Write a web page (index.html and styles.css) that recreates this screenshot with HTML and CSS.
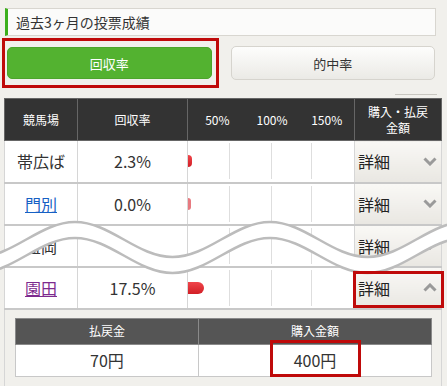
FILE: index.html
```html
<!DOCTYPE html>
<html lang="ja">
<head>
    <meta charset="UTF-8">
    <meta name="viewport" content="width=device-width, initial-scale=1.0">
    <title>過去3ヶ月の投票成績</title>
    <link rel="stylesheet" href="styles.css">
</head>
<body>
    <div class="heading">過去3ヶ月の投票成績</div>

    <div class="tabs">
        <button class="tab active">回収率</button>
        <button class="tab">的中率</button>
    </div>
    <div class="rule"></div>

    <table class="results">
        <colgroup>
            <col class="c-venue">
            <col class="c-rate">
            <col class="c-chart">
            <col class="c-more">
        </colgroup>
        <thead>
            <tr>
                <th>競馬場</th>
                <th>回収率</th>
                <th><div class="scale"><span>50%</span><span>100%</span><span>150%</span></div></th>
                <th>購入・払戻<br>金額</th>
            </tr>
        </thead>
        <tbody>
            <tr>
                <td>帯広ば</td>
                <td>2.3%</td>
                <td><div class="chart"><i></i><i></i><i></i><i></i><b class="bar" style="width: 4px"></b></div></td>
                <td class="more"><div class="more-btn">詳細<svg class="chev" viewBox="0 0 14 9"><polyline points="1.5,1.5 7,7 12.5,1.5"/></svg></div></td>
            </tr>
            <tr>
                <td><a href="#" class="venue">門別</a></td>
                <td>0.0%</td>
                <td><div class="chart"><i></i><i></i><i></i><i></i><b class="bar zero" style="width: 3px"></b></div></td>
                <td class="more"><div class="more-btn">詳細<svg class="chev" viewBox="0 0 14 9"><polyline points="1.5,1.5 7,7 12.5,1.5"/></svg></div></td>
            </tr>
            <tr>
                <td>盛岡</td>
                <td></td>
                <td><div class="chart"><i></i><i></i><i></i><i></i></div></td>
                <td class="more"><div class="more-btn">詳細<svg class="chev" viewBox="0 0 14 9"><polyline points="1.5,1.5 7,7 12.5,1.5"/></svg></div></td>
            </tr>
            <tr>
                <td><a href="#" class="venue visited">園田</a></td>
                <td>17.5%</td>
                <td><div class="chart"><i></i><i></i><i></i><i></i><b class="bar" style="width: 16px"></b></div></td>
                <td class="more"><div class="more-btn">詳細<svg class="chev" viewBox="0 0 14 9"><polyline points="1.5,7.5 7,2 12.5,7.5"/></svg></div></td>
            </tr>
            <tr class="detail">
                <td colspan="4">
                    <table class="breakdown">
                        <colgroup>
                            <col class="c-pay">
                            <col>
                        </colgroup>
                        <tr><th>払戻金</th><th>購入金額</th></tr>
                        <tr><td>70円</td><td>400円</td></tr>
                    </table>
                </td>
            </tr>
            <tr>
                <td></td>
                <td></td>
                <td><div class="chart"><i></i><i></i><i></i><i></i></div></td>
                <td class="more"></td>
            </tr>
        </tbody>
    </table>

    <!-- omitted rows -->
    <svg class="cut" viewBox="0 0 447 386">
        <path class="cut-fill" d="M -22.5 257 C 13 257, 39.5 222, 75 222 C 110.5 222, 137 257, 172.5 257 C 208 257, 234.5 222, 270 222 C 305.5 222, 332 257, 367.5 257 C 403 257, 429.5 222, 465 222 L 465 238 C 429.5 238, 403 273, 367.5 273 C 332 273, 305.5 238, 270 238 C 234.5 238, 208 273, 172.5 273 C 137 273, 110.5 238, 75 238 C 39.5 238, 13 273, -22.5 273 Z"/>
        <path class="cut-line" d="M -22.5 257 C 13 257, 39.5 222, 75 222 C 110.5 222, 137 257, 172.5 257 C 208 257, 234.5 222, 270 222 C 305.5 222, 332 257, 367.5 257 C 403 257, 429.5 222, 465 222"/>
        <path class="cut-line" d="M -22.5 273 C 13 273, 39.5 238, 75 238 C 110.5 238, 137 273, 172.5 273 C 208 273, 234.5 238, 270 238 C 305.5 238, 332 273, 367.5 273 C 403 273, 429.5 238, 465 238"/>
    </svg>

    <!-- highlight frames -->
    <div class="mark mark-tab"></div>
    <div class="mark mark-more"></div>
    <div class="mark mark-amount"></div>
</body>
</html>
```

FILE: styles.css
```css
* {
    margin: 0;
    padding: 0;
    box-sizing: border-box;
}

html, body {
    overflow: hidden;
}

body {
    background: #f1f0ec;
    font-family: "Noto Sans CJK JP", "Noto Sans", sans-serif;
    color: #333;
    width: 447px;
    height: 386px;
    position: relative;
}

.heading {
    margin: 8px 11px 0 5px;
    height: 28px;
    background: #fbfbfa;
    border: 1px solid #d8d6d0;
    border-left: 3px solid #3caf1c;
    padding-left: 8px;
    font-size: 14px;
    line-height: 26px;
}

.tabs {
    display: flex;
    gap: 19px;
    margin-top: 10px;
    padding: 0 12px 0 7px;
    align-items: center;
    height: 34px;
}

.tab {
    flex: 1;
    height: 34px;
    border: 1px solid #d6d4ce;
    border-radius: 5px;
    background: linear-gradient(#fdfdfc, #ebeae6);
    font-family: inherit;
    font-size: 13px;
    color: #333;
}

.tab.active {
    height: 32px;
    background: #53b230;
    border-color: #4ca52b;
    color: #fff;
}

.rule {
    width: 42px;
    margin: 14px 10px 0 auto;
    border-top: 1px solid #c9c7c1;
}

.results {
    border-collapse: collapse;
    table-layout: fixed;
    width: 437px;
    margin: 3px 0 0 4px;
    background: #fff;
}

.c-venue { width: 73px; }
.c-rate { width: 110px; }
.c-chart { width: 167px; }
.c-more { width: 87px; }

.results th {
    background: #333;
    color: #fff;
    font-size: 12px;
    font-weight: normal;
    line-height: 16px;
    height: 42px;
    border: 1px solid #666;
}

.scale {
    display: flex;
    padding-left: 2px;
}

.scale span {
    width: 55px;
    text-align: center;
}

.results > tbody > tr > td {
    height: 42px;
    border-left: 1px solid #d6d6d6;
    border-right: 1px solid #d6d6d6;
    border-bottom: 2px solid #c8c8c8;
    text-align: center;
    font-size: 16px;
}

.venue {
    color: #1660c4;
}

.venue.visited {
    color: #7d2a8e;
}

.chart {
    position: relative;
    display: grid;
    grid-template-columns: 42px 42px 40px 1fr;
    height: 36px;
}

.chart i {
    border-right: 1px solid #dedede;
}

.chart i:last-of-type {
    border-right: none;
}

.bar {
    position: absolute;
    left: 0;
    top: 12px;
    height: 12px;
    border-radius: 0 6px 6px 0;
    background: linear-gradient(#f0454b, #d21f26);
}

.bar.zero {
    background: #e77a80;
}

.results td.more {
    background: linear-gradient(#f9f8f5, #e9e7e2);
    text-align: left;
}

.more-btn {
    display: flex;
    justify-content: space-between;
    align-items: center;
    padding: 0 4px 0 3px;
    color: #222;
}

.chev {
    width: 14px;
    height: 9px;
}

.chev polyline {
    fill: none;
    stroke: #9a9a9a;
    stroke-width: 3;
}

.results > tbody > tr.detail > td {
    height: auto;
    background: #f1f0ec;
    padding: 8px 9px 9px 10px;
}

.breakdown {
    width: 100%;
    border-collapse: collapse;
    table-layout: fixed;
}

.c-pay { width: 183px; }

.breakdown th {
    background: #555;
    color: #fff;
    font-size: 12px;
    font-weight: normal;
    height: 26px;
    border: 1px solid #8a8a8a;
}

.breakdown td {
    background: #fff;
    height: 32px;
    font-size: 16px;
    text-align: center;
    border: 1px solid #c8c8c8;
}

.cut {
    position: absolute;
    left: 0;
    top: 0;
    width: 447px;
    height: 386px;
    pointer-events: none;
}

.cut-fill {
    fill: #fff;
}

.cut-line {
    fill: none;
    stroke: #bcbcbc;
    stroke-width: 2.5;
}

.mark {
    position: absolute;
    border: 3px solid #bf0a0a;
}

.mark-tab {
    left: 2px;
    top: 38px;
    width: 217px;
    height: 50px;
}

.mark-more {
    left: 353px;
    top: 271px;
    width: 91px;
    height: 37px;
}

.mark-amount {
    left: 270px;
    top: 340px;
    width: 91px;
    height: 37px;
}
```
